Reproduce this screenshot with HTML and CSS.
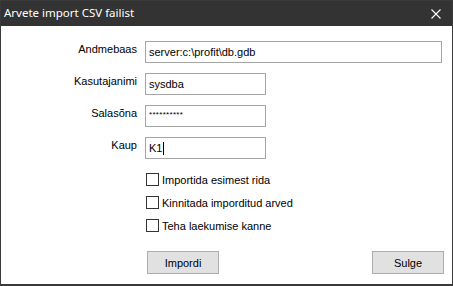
FILE: index.html
```html
<!DOCTYPE html>
<html>
<head>
<meta charset="utf-8">
<link rel="stylesheet" href="styles.css">
</head>
<body>
<div class="window">
  <div class="titlebar">
    <span class="title">Arvete import CSV failist</span>
    <svg class="close" width="10" height="10" viewBox="0 0 10 10"><path d="M0.5 0.5L9.5 9.5M9.5 0.5L0.5 9.5" stroke="#fff" stroke-width="1.1" fill="none"/></svg>
  </div>
  <div class="content">
    <div class="form">
      <label class="lbl">Andmebaas</label>
      <div class="field wide">server:c:\profit\db.gdb</div>
      <label class="lbl">Kasutajanimi</label>
      <div class="field">sysdba</div>
      <label class="lbl">Salasõna</label>
      <div class="field pwd">**********</div>
      <label class="lbl">Kaup</label>
      <div class="field">K1<span class="caret"></span></div>
    </div>
    <div class="checks">
      <div class="check"><span class="box"></span>Importida esimest rida</div>
      <div class="check"><span class="box"></span>Kinnitada imporditud arved</div>
      <div class="check"><span class="box"></span>Teha laekumise kanne</div>
    </div>
    <div class="buttons">
      <div class="btn">Impordi</div>
      <div class="btn right">Sulge</div>
    </div>
  </div>
</div>
</body>
</html>
```
FILE: styles.css
```css
html, body {
  margin: 0;
  padding: 0;
  background: #fff;
}
.window {
  width: 453px;
  height: 286px;
  box-sizing: border-box;
  border: 1px solid #3a3a3a;
  border-bottom-width: 2px;
  background: #fff;
  display: flex;
  flex-direction: column;
  font-family: "Liberation Sans", Arial, sans-serif;
  font-size: 11px;
  color: #000;
}
.titlebar {
  height: 25px;
  background: #333333;
  display: flex;
  align-items: center;
  padding: 0 11px 0 3px;
  flex: none;
}
.title {
  font-family: "Noto Sans", "Open Sans", sans-serif;
  font-size: 11.5px;
  color: #fff;
  flex: 1;
  position: relative;
  top: -1px;
}
.content {
  padding-top: 15px;
  display: flex;
  flex-direction: column;
}
.form {
  display: grid;
  grid-template-columns: 136px auto;
  column-gap: 8px;
  row-gap: 10px;
  align-items: center;
  justify-items: start;
}
.lbl {
  justify-self: end;
  position: relative;
  top: -3px;
}
.field {
  box-sizing: border-box;
  width: 121px;
  height: 22px;
  border: 1px solid #a5a5a5;
  padding: 0 3px;
  display: flex;
  align-items: center;
  font-size: 11px;
}
.field.wide {
  width: 297px;
}
.pwd {
  font-size: 8px;
  letter-spacing: 0.3px;
  align-items: flex-start;
  padding-top: 4px;
}
.caret {
  display: inline-block;
  width: 1px;
  height: 13px;
  background: #000;
  margin-left: 1px;
}
.checks {
  margin-top: 14px;
  margin-left: 145px;
  display: flex;
  flex-direction: column;
  gap: 10px;
}
.check {
  display: flex;
  align-items: center;
  height: 13px;
}
.box {
  width: 13px;
  height: 13px;
  box-sizing: border-box;
  border: 1px solid #333;
  background: #fff;
  margin-right: 3px;
}
.buttons {
  margin-top: 19px;
  display: flex;
  padding: 0 8px 0 146px;
}
.btn {
  width: 72px;
  height: 23px;
  box-sizing: border-box;
  border: 1px solid #adadad;
  background: #e1e1e1;
  display: flex;
  align-items: center;
  justify-content: center;
}
.btn.right {
  margin-left: auto;
}
```
